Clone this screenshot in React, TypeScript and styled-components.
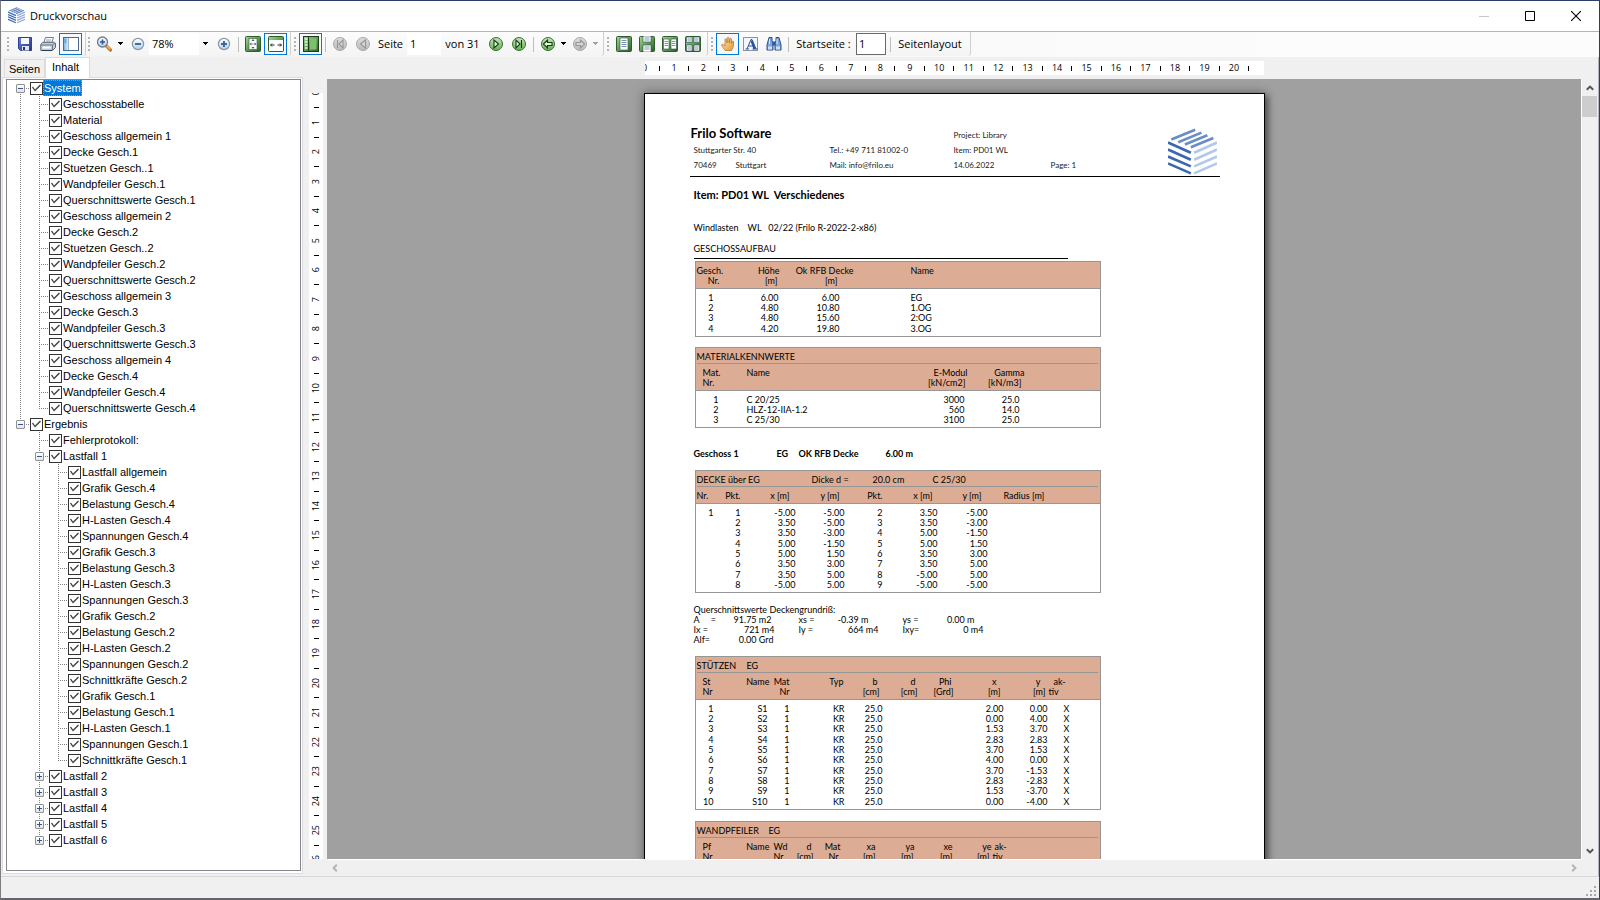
import React from 'react';
import styled, { createGlobalStyle, css } from 'styled-components';

const GlobalStyle = createGlobalStyle`
  * { box-sizing: border-box; }
  body { margin: 0; background: #f0f0f0; overflow: hidden; }
  button, input { font: inherit; color: inherit; }
`;

const uiFont = '"Open Sans", "Noto Sans", sans-serif';
const treeFont = '"Liberation Sans", Arial, sans-serif';
const docFont = 'Lato, Carlito, sans-serif';

/* ---------- window frame ---------- */

const Window = styled.div`
  display: flex;
  flex-direction: column;
  height: 100vh;
  background: #f0f0f0;
  border: 1px solid #2c3e66;
  border-left-color: #7d7d82;
  border-bottom: 2px solid #66666a;
  font: 11px/16px ${uiFont};
  color: #000;
`;

const TitleBar = styled.header`
  display: flex;
  align-items: center;
  flex: 0 0 31px;
  padding: 0 0 1px 7px;
  background: #fff;
  border-bottom: 1px solid #b2b5c1;
`;

const Title = styled.h1`
  flex: 1;
  margin: 0 0 0 5px;
  font-size: 11px;
  font-weight: 400;
  line-height: 16px;
`;

const CaptionButton = styled.button`
  display: grid;
  place-items: center;
  width: 46px;
  height: 29px;
  padding: 0;
  border: 0;
  background: none;
`;

/* ---------- toolbar ---------- */

const Toolbar = styled.div`
  display: flex;
  flex: 0 0 25px;
  background: linear-gradient(to right, #f1f1f2, #fcfcfc 80%);
  padding-left: 1px;
`;

const Strip = styled.div<{ $end?: number }>`
  display: flex;
  align-items: center;
  height: 24px;
  padding-right: ${(p) => p.$end ?? 3}px;
  background: linear-gradient(#fcfcfc, #f4f4f4);
  border-right: 1px solid #d0d0d0;
  border-radius: 0 0 3px 3px;
`;

const Grip = styled.span<{ $w?: number }>`
  flex: 0 0 ${(p) => p.$w ?? 8}px;
  height: 15px;
  background: repeating-linear-gradient(#b4b4b4 0 2px, transparent 2px 4px) center / 2px 100% no-repeat;
`;

const ToolButton = styled.button<{ $active?: boolean }>`
  display: grid;
  place-items: center;
  flex: 0 0 23px;
  height: 22px;
  padding: 0;
  border: 1px solid ${(p) => (p.$active ? '#0078d7' : 'transparent')};
  background: ${(p) => (p.$active ? '#f6f9fc' : 'none')};
`;

const CaretButton = styled.button<{ $w?: number }>`
  display: grid;
  place-items: center;
  flex: 0 0 ${(p) => p.$w ?? 9}px;
  height: 22px;
  padding: 0;
  border: 0;
  background: none;
`;

const Separator = styled.span<{ $w?: number }>`
  flex: 0 0 ${(p) => p.$w ?? 6}px;
  height: 15px;
  background: linear-gradient(#bdbdbd, #bdbdbd) center / 1px 100% no-repeat;
`;

const Field = styled.input<{ $w: number; $boxed?: boolean }>`
  width: ${(p) => p.$w}px;
  height: 22px;
  padding: 0 2px 2px;
  border: 1px solid ${(p) => (p.$boxed ? '#6a6a6a' : '#fff')};
  border-radius: 0;
  background: #fff;
  outline: 0;
`;

const ToolLabel = styled.label<{ $w: number }>`
  flex: 0 0 ${(p) => p.$w}px;
  text-align: center;
  white-space: nowrap;
`;

const TextButton = styled.button`
  flex: 0 0 72px;
  padding: 0;
  border: 0;
  background: none;
  white-space: nowrap;
`;

/* ---------- side panel ---------- */

const Main = styled.div`
  display: flex;
  flex: 1;
  min-height: 0;
  padding-left: 1px;
  border-right: 1px solid #b2b5c1;
`;

const SidePanel = styled.aside`
  display: flex;
  flex-direction: column;
  flex: 0 0 301px;
  margin-bottom: 2px;
  font: 11px/16px ${treeFont};
`;

const TabList = styled.div`
  display: flex;
  align-items: flex-end;
  flex: 0 0 20px;
  padding-left: 2px;
`;

const Tab = styled.button<{ $selected?: boolean }>`
  height: ${(p) => (p.$selected ? 21 : 18)}px;
  width: ${(p) => (p.$selected ? 45 : 41)}px;
  padding: 0 ${(p) => (p.$selected ? '4px 2px 0' : 0)};
  border: 1px solid #dcdcdc;
  border-bottom: 0;
  background: ${(p) => (p.$selected ? '#fff' : '#f0f0f0')};
  margin-bottom: ${(p) => (p.$selected ? -1 : 0)}px;
  z-index: ${(p) => (p.$selected ? 1 : 0)};
`;

const TabPane = styled.div`
  display: flex;
  flex: 1;
  min-height: 0;
  padding: 1px 1px 2px 3px;
  background: #fff;
  border: 1px solid #dcdcdc;
`;

const TreeBox = styled.div`
  flex: 1;
  padding: 0 0 0 4px;
  border: 1px solid #828790;
  background: #fff;
  overflow: hidden;
`;

const TreeRow = styled.div`
  display: flex;
  align-items: center;
  height: 16px;
`;

type GuideKind = 'blank' | 'line' | 'tee' | 'end' | 'first';
const dotsV = 'repeating-linear-gradient(to bottom, #808080 0 1px, transparent 1px 2px)';
const dotsH = 'repeating-linear-gradient(to right, #808080 0 1px, transparent 1px 2px)';
const guideBackground: Record<GuideKind, string> = {
  blank: 'none',
  line: `${dotsV} 9px 0 / 1px 100% no-repeat`,
  tee: `${dotsV} 9px 0 / 1px 100% no-repeat, ${dotsH} 9px 8px / 9px 1px no-repeat`,
  end: `${dotsV} 9px 0 / 1px 8px no-repeat, ${dotsH} 9px 8px / 9px 1px no-repeat`,
  first: `${dotsV} 9px 8px / 1px 8px no-repeat, ${dotsH} 9px 8px / 9px 1px no-repeat`,
};

const Guide = styled.span<{ $kind: GuideKind }>`
  display: flex;
  flex: 0 0 19px;
  height: 16px;
  padding: 4px 5px;
  background: ${(p) => guideBackground[p.$kind]};
`;

const Expander = styled.button`
  display: grid;
  place-items: center;
  width: 9px;
  height: 9px;
  padding: 0;
  border: 1px solid #919191;
  border-radius: 1px;
  background: linear-gradient(#fff, #e4e4e4);
`;

const TreeLabel = styled.label<{ $selected?: boolean }>`
  display: flex;
  align-items: center;
  height: 16px;
  white-space: nowrap;
  span {
    padding: 0 1px;
    height: 16px;
    ${(p) =>
      p.$selected &&
      css`
        background: #0078d7;
        color: #fff;
        outline: 1px dotted #d88a3a;
        outline-offset: -1px;
      `}
  }
`;

const Check = styled.input`
  appearance: none;
  width: 13px;
  height: 13px;
  margin: 0;
  border: 1px solid #333;
  background: #fff;
  &:checked::before {
    content: '';
    display: block;
    width: 11px;
    height: 11px;
    background: #444;
    clip-path: polygon(1px 5px, 2px 4px, 4px 7px, 9px 2px, 10px 3px, 4px 9px);
  }
`;

const system = [
  'Geschosstabelle', 'Material', 'Geschoss allgemein 1', 'Decke Gesch.1', 'Stuetzen Gesch..1',
  'Wandpfeiler Gesch.1', 'Querschnittswerte Gesch.1', 'Geschoss allgemein 2', 'Decke Gesch.2',
  'Stuetzen Gesch..2', 'Wandpfeiler Gesch.2', 'Querschnittswerte Gesch.2', 'Geschoss allgemein 3',
  'Decke Gesch.3', 'Wandpfeiler Gesch.3', 'Querschnittswerte Gesch.3', 'Geschoss allgemein 4',
  'Decke Gesch.4', 'Wandpfeiler Gesch.4', 'Querschnittswerte Gesch.4',
];
const lastfall = [
  'Lastfall allgemein', 'Grafik Gesch.4', 'Belastung Gesch.4', 'H-Lasten Gesch.4', 'Spannungen Gesch.4',
  'Grafik Gesch.3', 'Belastung Gesch.3', 'H-Lasten Gesch.3', 'Spannungen Gesch.3', 'Grafik Gesch.2',
  'Belastung Gesch.2', 'H-Lasten Gesch.2', 'Spannungen Gesch.2', 'Schnittkräfte Gesch.2', 'Grafik Gesch.1',
  'Belastung Gesch.1', 'H-Lasten Gesch.1', 'Spannungen Gesch.1', 'Schnittkräfte Gesch.1',
];

type Node = { text: string; guides: GuideKind[]; box?: 'plus' | 'minus'; selected?: boolean };
const nodes: Node[] = [
  { text: 'System', guides: ['first'], box: 'minus', selected: true },
  ...system.map((text, i): Node => ({ text, guides: ['line', i === system.length - 1 ? 'end' : 'tee'] })),
  { text: 'Ergebnis', guides: ['end'], box: 'minus' },
  { text: 'Fehlerprotokoll:', guides: ['blank', 'tee'] },
  { text: 'Lastfall 1', guides: ['blank', 'tee'], box: 'minus' },
  ...lastfall.map((text, i): Node => ({ text, guides: ['blank', 'line', i === lastfall.length - 1 ? 'end' : 'tee'] })),
  ...[2, 3, 4, 5, 6].map((n): Node => ({ text: `Lastfall ${n}`, guides: ['blank', n === 6 ? 'end' : 'tee'], box: 'plus' })),
];

const Tree = () => (
  <TreeBox role="tree">
    {nodes.map((n, i) => (
      <TreeRow key={i} role="treeitem">
        {n.guides.map((g, j) => (
          <Guide key={j} $kind={g}>
            {n.box && j === n.guides.length - 1 && (
              <Expander aria-label={n.box === 'plus' ? 'Aufklappen' : 'Zuklappen'}>
                <svg width="7" height="7" viewBox="0 0 7 7" shapeRendering="crispEdges">
                  <path d={n.box === 'plus' ? 'M1 3h5v1H1zM3 1h1v5H3z' : 'M1 3h5v1H1z'} fill="#33549c" />
                </svg>
              </Expander>
            )}
          </Guide>
        ))}
        <TreeLabel $selected={n.selected}>
          <Check type="checkbox" defaultChecked />
          <span>{n.text}</span>
        </TreeLabel>
      </TreeRow>
    ))}
  </TreeBox>
);

/* ---------- preview area ---------- */

const Preview = styled.main`
  display: grid;
  grid-template-columns: 24px minmax(0, 1fr) 17px;
  grid-template-rows: 22px minmax(0, 1fr) 17px;
  flex: 1;
  min-width: 0;
`;

const Canvas = styled.div`
  grid-column: 2;
  grid-row: 2;
  display: flex;
  justify-content: center;
  align-items: flex-start;
  padding-top: 14px;
  overflow: hidden;
  background: #a0a0a0;
  box-shadow: 1px 1px 0 #fff;
`;

const RulerH = styled.div`
  grid-column: 2;
  grid-row: 1;
  justify-self: center;
  display: flex;
  justify-content: space-between;
  align-items: center;
  width: 619px;
  height: 14px;
  margin: 4px 0;
  overflow: hidden;
  background: #fff;
  font-size: 9px;
  line-height: 14px;
`;

const RulerV = styled.div`
  grid-column: 1;
  grid-row: 2;
  width: 14px;
  margin: 14px 0 0 6px;
  overflow: hidden;
  background: #fff;
  font-size: 9px;
  line-height: 14px;
`;

const RulerScale = styled.div`
  display: flex;
  flex-direction: column;
  justify-content: space-between;
  align-items: center;
  height: 885px;
`;

const Mark = styled.span<{ $vertical?: boolean }>`
  display: flex;
  align-items: center;
  justify-content: center;
  flex: none;
  ${(p) => (p.$vertical ? 'height: 0; width: 14px;' : 'width: 0;')}
  b {
    flex: none;
    font-weight: 400;
    ${(p) => p.$vertical && 'writing-mode: vertical-rl; transform: rotate(180deg);'}
  }
  i {
    flex: none;
    background: #000;
    width: ${(p) => (p.$vertical ? 5 : 1)}px;
    height: ${(p) => (p.$vertical ? 1 : 5)}px;
  }
`;

const marks = (cm: number, vertical?: boolean) =>
  Array.from({ length: cm * 2 + 1 }, (_, i) => (
    <Mark key={i} $vertical={vertical}>
      {i % 2 ? <i /> : i === cm * 2 ? null : <b>{i / 2}</b>}
    </Mark>
  ));

const ScrollV = styled.div`
  grid-column: 3;
  grid-row: 2;
  display: flex;
  flex-direction: column;
  align-items: center;
  padding: 0 1px;
`;

const ScrollThumb = styled.div`
  width: 15px;
  height: 21px;
  background: #cdcdcd;
`;

const ScrollH = styled.div`
  grid-column: 2;
  grid-row: 3;
  display: flex;
  justify-content: space-between;
`;

const ScrollButton = styled.button`
  display: grid;
  place-items: center;
  width: 15px;
  height: 17px;
  padding: 0;
  border: 0;
  background: none;
`;

const Spacer = styled.div`
  flex: 1;
`;

const StatusBar = styled.footer`
  display: flex;
  justify-content: flex-end;
  align-items: flex-end;
  flex: 0 0 22px;
  padding: 0 3px 2px 0;
  border-top: 1px solid #d7d7d7;
`;

/* ---------- printed sheet ---------- */

const Sheet = styled.article`
  flex: 0 0 621px;
  height: 879px;
  padding: 33px 44px 0 45px;
  background: #fff;
  border: 1px solid #000;
  box-shadow: 0 0 10px 1px rgba(0, 0, 0, 0.3), 3px 3px 6px rgba(0, 0, 0, 0.4);
  font: 9px/10px ${docFont};
  white-space: nowrap;
`;

const Letterhead = styled.header`
  display: grid;
  grid-template-columns: 42px 94px 124px 97px 117px auto;
  grid-template-rows: 15px 15px 15px;
  padding: 1px 0 3px 1px;
  border-bottom: 1px solid #000;
  font-size: 8px;
  line-height: 15px;
  color: #222;
`;

const Company = styled.strong`
  grid-column: 1 / 4;
  font-size: 13px;
  line-height: 10px;
  color: #000;
`;

const HeadCell = styled.span<{ $col: string; $row: string }>`
  grid-column: ${(p) => p.$col};
  grid-row: ${(p) => p.$row};
  padding-left: 3px;
`;

const LogoCell = styled.span`
  display: flex;
  grid-column: 6;
  grid-row: 1 / 4;
  align-items: flex-start;
  padding-left: 3px;
`;

const Content = styled.section`
  padding-left: 4px;
`;

const ItemTitle = styled.h2`
  margin: 11px 0 20px;
  font-size: 11px;
  line-height: 14px;
  white-space: pre;
`;

const Line = styled.p`
  margin: 0 0 9px;
  line-height: 12px;
  white-space: pre;
`;

const SectionTitle = styled.h3`
  width: 374px;
  margin: 0 0 2px;
  padding-bottom: 3px;
  border-bottom: 1px solid #000;
  font-size: 9px;
  font-weight: 400;
  line-height: 12px;
`;

const FloorLine = styled.h3`
  display: flex;
  margin: 20px 0 10px;
  font-size: 9px;
  line-height: 12px;
`;

const Part = styled.span<{ $w?: number }>`
  flex: none;
  width: ${(p) => (p.$w ? `${p.$w}px` : 'auto')};
`;

const DataTable = styled.table<{ $gap?: number }>`
  width: 406px;
  margin: ${(p) => p.$gap ?? 0}px 0 0 1px;
  table-layout: fixed;
  border-collapse: separate;
  border-spacing: 0;
  border: 1px solid #969696;
  thead { background: #dcac94; }
  thead tr:last-child th { padding-bottom: 2px; border-bottom: 1px solid #969696; }
  tbody tr:first-child td { padding-top: 4px; }
  tbody tr:nth-child(3n) td { padding-bottom: 1px; }
  tbody tr:last-child td { padding-bottom: 2px; }
`;

const cell = css<{ $align: 'l' | 'r'; $pad: number; $top?: boolean }>`
  padding: ${(p) => (p.$top ? 4 : 0)}px ${(p) => (p.$align === 'r' ? p.$pad : 0)}px 0
    ${(p) => (p.$align === 'l' ? p.$pad : 0)}px;
  text-align: ${(p) => (p.$align === 'r' ? 'right' : 'left')};
  font-weight: 400;
  line-height: 10px;
  height: 10px;
  vertical-align: top;
`;
const Th = styled.th`${cell}`;
const Td = styled.td`${cell}`;

const TitleCell = styled.th`
  padding: 0 2px 0 1px;
  font-weight: 400;
`;

const TitleLine = styled.div`
  display: flex;
  height: 16px;
  padding-top: 4px;
  border-bottom: 1px solid #969696;
`;

type Align = 'l' | 'r';
type HeadSpec = [string, Align?, number?];
type Column = [number, Align, number];

type ReportProps = {
  columns: Column[];
  title?: [string, number?][];
  head: HeadSpec[][];
  rows: string[][];
  gap?: number;
};

const Report = ({ columns, title, head, rows, gap }: ReportProps) => (
  <DataTable $gap={gap}>
    <colgroup>
      {columns.map(([w], i) => (
        <col key={i} width={i === columns.length - 1 ? undefined : w} />
      ))}
    </colgroup>
    <thead>
      {title && (
        <tr>
          <TitleCell colSpan={columns.length}>
            <TitleLine>
              {title.map(([t, w]) => (
                <Part key={t} $w={w} style={{ textAlign: 'left' }}>{t}</Part>
              ))}
            </TitleLine>
          </TitleCell>
        </tr>
      )}
      {head.map((line, r) => (
        <tr key={r}>
          {line.map(([t, a = 'l', pad = 0], i) => (
            <Th key={i} $align={a} $pad={pad} $top={r === 0}>{t}</Th>
          ))}
        </tr>
      ))}
    </thead>
    <tbody>
      {rows.map((row, r) => (
        <tr key={r}>
          {row.map((t, i) => (
            <Td key={i} $align={columns[i][1]} $pad={columns[i][2]}>{t}</Td>
          ))}
        </tr>
      ))}
    </tbody>
  </DataTable>
);

const Summary = styled.table`
  width: 406px;
  margin: 12px 0 11px;
  table-layout: fixed;
  border-collapse: collapse;
  white-space: pre;
  caption { text-align: left; line-height: 10px; }
`;

const summaryRows: HeadSpec[][] = [
  [['A     ='], ['91.75 m2', 'r', 27], ['xs ='], ['-0.39 m', 'r', 34], ['ys ='], ['0.00 m', 'r', 125]],
  [['Ix ='], ['721 m4', 'r', 24], ['Iy ='], ['664 m4', 'r', 24], ['Ixy='], ['0 m4', 'r', 116]],
  [['Alf='], ['0.00 Grd', 'r', 25], [''], [''], [''], ['']],
];

const deckPoints = [
  ['1', '1', '-5.00', '-5.00', '2', '3.50', '-5.00', ''],
  ['', '2', '3.50', '-5.00', '3', '3.50', '-3.00', ''],
  ['', '3', '3.50', '-3.00', '4', '5.00', '-1.50', ''],
  ['', '4', '5.00', '-1.50', '5', '5.00', '1.50', ''],
  ['', '5', '5.00', '1.50', '6', '3.50', '3.00', ''],
  ['', '6', '3.50', '3.00', '7', '3.50', '5.00', ''],
  ['', '7', '3.50', '5.00', '8', '-5.00', '5.00', ''],
  ['', '8', '-5.00', '5.00', '9', '-5.00', '-5.00', ''],
];

const supports = [
  ['2.00', '0.00'], ['0.00', '4.00'], ['1.53', '3.70'], ['2.83', '2.83'], ['3.70', '1.53'],
  ['4.00', '0.00'], ['3.70', '-1.53'], ['2.83', '-2.83'], ['1.53', '-3.70'], ['0.00', '-4.00'],
].map(([x, y], i) => [`${i + 1}`, `S${i + 1}`, '1', 'KR', '25.0', '', '', x, y, 'X']);

/* ---------- drawings ---------- */

const Logo = ({ size, bold }: { size: number; bold?: boolean }) => {
  const w = bold ? 11 : 8;
  return (
    <svg width={size} height={size} viewBox="0 0 148 148" fill="none" strokeWidth={w}>
      <path stroke="#3a68ae" d="M0 44l69 31M0 65l69 31M0 86l69 30M0 107l69 30" />
      <path stroke={bold ? '#8fa9d8' : '#b3c8ea'} d="M79 75l69-31M79 96l69-31M79 116l69-30M79 137l69-30" />
      <path stroke="#6a8cc9" d="M10 35L82 5M31 43l70-29M51 50l68-28M69 58l68-28" />
    </svg>
  );
};

const Icon = ({ children }: { children: React.ReactNode }) => (
  <svg width="16" height="16" viewBox="0 0 16 16" fill="none">{children}</svg>
);

const HiddenSvg = styled.svg`
  display: block;
`;

const Defs = () => (
  <HiddenSvg width="0" height="0" aria-hidden="true">
    <defs>
      <linearGradient id="green" x1="0" y1="0" x2="1" y2="1">
        <stop offset="0" stopColor="#a5d69b" />
        <stop offset="0.5" stopColor="#5d9e55" />
        <stop offset="1" stopColor="#2c5a2a" />
      </linearGradient>
      <linearGradient id="ball" x1="0" y1="0" x2="0" y2="1">
        <stop offset="0" stopColor="#c4e8b8" />
        <stop offset="1" stopColor="#62b050" />
      </linearGradient>
      <linearGradient id="grey" x1="0" y1="0" x2="0" y2="1">
        <stop offset="0" stopColor="#dedede" />
        <stop offset="1" stopColor="#b9b9b9" />
      </linearGradient>
      <linearGradient id="lens" x1="0" y1="0" x2="0" y2="1">
        <stop offset="0" stopColor="#fff" />
        <stop offset="1" stopColor="#b5cfea" />
      </linearGradient>
      <linearGradient id="navy" x1="0" y1="0" x2="1" y2="1">
        <stop offset="0" stopColor="#6f86dd" />
        <stop offset="1" stopColor="#22337e" />
      </linearGradient>
      <linearGradient id="skin" x1="0" y1="0" x2="1" y2="1">
        <stop offset="0" stopColor="#ffe9b4" />
        <stop offset="1" stopColor="#e79a35" />
      </linearGradient>
      <linearGradient id="pane" x1="0" y1="0" x2="1" y2="0">
        <stop offset="0" stopColor="#7fb9e2" />
        <stop offset="1" stopColor="#d6ecfa" />
      </linearGradient>
    </defs>
  </HiddenSvg>
);

const SaveIcon = () => (
  <Icon>
    <path d="M1.500 1.500h13v13h-11l-2-2z" fill="url(#navy)" stroke="#2d3f92" />
    <path d="M4 2h8v6H4z" fill="#f4f7ff" />
    <path d="M5 10h7v4.500H5z" fill="#dfe4f0" />
    <path d="M6 11h2v3H6z" fill="#24326f" />
  </Icon>
);
const PrintIcon = () => (
  <Icon>
    <path d="M5.500 1.500h8l-2 6h-8z" fill="#fff" stroke="#6d7f95" />
    <path d="M6 4h5M5.500 6h5" stroke="#7da3cf" />
    <path d="M.8 8.500l2-2.200h11l1.700 1.200v4l-3 3H.8z" fill="#c3ccd6" stroke="#5c6876" />
    <path d="M1 9h11.500v5M12.500 9l3-2" stroke="#6c7886" />
    <path d="M2.500 11.500h8" stroke="#fff" strokeWidth="2" />
    <path d="M2 14.500h10" stroke="#2f3a48" />
  </Icon>
);
const PanelIcon = () => (
  <Icon>
    <rect x=".5" y="1.500" width="15" height="13" fill="#fff" stroke="#4a6c94" />
    <path d="M1 2h4v12H1z" fill="url(#pane)" />
    <path d="M1.500 4h2M1.500 6h2" stroke="#3d86c0" />
    <path d="M5.500 2v12" stroke="#9cb2c8" />
  </Icon>
);
const MagnifyIcon = () => (
  <Icon>
    <path d="M10 9.500l4.500 4.500" stroke="#c77b2c" strokeWidth="3.200" strokeLinecap="round" />
    <path d="M10.500 9.500l3.500 3.500" stroke="#f0bf7b" strokeWidth="1.200" />
    <circle cx="6.500" cy="6" r="5" fill="url(#lens)" stroke="#6d7b8c" strokeWidth="1.300" />
    <path d="M4 6h5M6.500 3.500v5" stroke="#2d5a96" strokeWidth="1.600" />
  </Icon>
);
const RoundIcon = ({ plus }: { plus?: boolean }) => (
  <Icon>
    <circle cx="8" cy="8" r="5.600" fill="url(#lens)" stroke="#8d98a5" strokeWidth="1.200" />
    <path d={plus ? 'M5 8h6M8 5v6' : 'M5 8h6'} stroke="#3a679f" strokeWidth="1.900" />
  </Icon>
);
const FitPageIcon = () => (
  <Icon>
    <rect x=".5" y=".5" width="15" height="15" rx="1" fill="url(#green)" stroke="#2f5e2c" />
    <rect x="4" y="2.500" width="8" height="11" fill="#fff" stroke="#3d5a3a" strokeWidth=".6" />
    <path d="M8 3l1.500 2h-3zM8 13l1.500-2h-3zM4.500 8l2-1.500v3zM11.500 8l-2-1.500v3z" fill="#44546a" />
    <path d="M7.500 7.500h1v1h-1z" fill="#44546a" />
  </Icon>
);
const FitWidthIcon = () => (
  <Icon>
    <rect x=".5" y=".5" width="15" height="15" rx="1" fill="url(#green)" stroke="#2f5e2c" />
    <rect x="1" y="4" width="14" height="11" fill="#fff" />
    <path d="M2.500 9h4M9.500 9h4M4 7.500L2.500 9 4 10.500M12 7.500L13.500 9 12 10.500" stroke="#1d2a38" />
  </Icon>
);
const ThumbIcon = () => (
  <Icon>
    <rect x=".5" y=".5" width="15" height="15" fill="url(#green)" stroke="#1e3c1c" />
    <path d="M5.500 1v14" stroke="#1e3c1c" />
    <path d="M2 3h2.500M2 6h2.500M2 9h2.500M2 12h2.500" stroke="#e9fbe4" strokeWidth="1.500" />
    <path d="M7 2.500h6.500v11H7z" fill="#7cc06e" />
  </Icon>
);
const navPaths = {
  first: 'M5.500 4v8M11 4v8L7 8z',
  prev: 'M10.500 4v8L5.500 8z',
  next: 'M6 4v8l4.500-4z',
  last: 'M5 4v8l4-4zM10.500 4v8',
  back: 'M3.500 8l4-4v2.500h4.500v3H7.500V12z',
  forward: 'M12.500 8l-4-4v2.500H4v3h4.500V12z',
};
const NavIcon = ({ kind, off }: { kind: keyof typeof navPaths; off?: boolean }) => (
  <Icon>
    <circle cx="8" cy="8" r="6.500" fill={off ? 'url(#grey)' : 'url(#ball)'} stroke={off ? '#a9a9a9' : '#3d6b36'} />
    <path d={navPaths[kind]} fill={off ? '#d6d6d6' : '#e6f8df'} stroke={off ? '#969696' : '#173a14'} strokeWidth="1.100" />
  </Icon>
);
const LayoutIcon = ({ kind }: { kind: 'single' | 'rows' | 'cols' | 'grid' }) => {
  const pages = {
    single: 'M4 2h8v12H4z',
    rows: 'M4 0h8v6H4zM4 9h8v7H4z',
    cols: 'M1.500 3H7v10H1.500zM9 3h5.500v10H9z',
    grid: 'M1.500 1H7v5.500H1.500zM9 1h5.500v5.500H9zM1.500 9H7v6H1.500zM9 9h5.500v6H9z',
  };
  const lines = {
    single: 'M5.500 4.500h5M5.500 6.500h5M5.500 8.500h5M5.500 10.500h5',
    rows: 'M5.500 2h5M5.500 4h5M5.500 11h5M5.500 13h5',
    cols: 'M2.500 5.500h3.500M2.500 7.500h3.500M2.500 9.500h3.500M10 5.500h3.500M10 7.500h3.500M10 9.500h3.500',
    grid: 'M2.500 3h3.500M2.500 5h3.500M10 3h3.500M10 5h3.500M2.500 11h3.500M2.500 13h3.500M10 11h3.500M10 13h3.500',
  };
  return (
    <Icon>
      <rect x=".5" y=".5" width="15" height="15" rx="1" fill="url(#green)" stroke="#2f5e2c" />
      <path d={pages[kind]} fill="#fff" stroke="#2b4d52" strokeWidth=".6" />
      <path d={lines[kind]} stroke="#6d87a8" strokeWidth=".9" />
    </Icon>
  );
};
const HandIcon = () => (
  <Icon>
    <path
      d="M5.200 14.500L1.800 9.800c-.8-1.200.6-2 1.400-1.200L5 10V3.600c0-1.200 1.500-1.200 1.600 0L7 7l.2-4.800c0-1.300 1.700-1.300 1.800 0L9.200 7l.6-4c.2-1.100 1.700-.9 1.600.3L11.400 7.500l.6-2c.4-.9 1.700-.5 1.600.5L13.300 10.500l-1.800 4z"
      fill="url(#skin)"
      stroke="#b5742c"
      strokeWidth=".8"
    />
  </Icon>
);
const SelectTextIcon = () => (
  <Icon>
    <rect x=".5" y="1.500" width="14" height="13" fill="#f3f7fd" stroke="#222f4a" strokeDasharray="1 1" />
    <path d="M4 13l4-9.500h1l4 9.500M5.500 10h6M2.500 13h3.500M9.500 13h5" stroke="#2c5399" />
    <path d="M8.500 4.500l3.200 8.500" stroke="#2c5399" strokeWidth="2.200" />
  </Icon>
);
const FindIcon = () => (
  <Icon>
    <path d="M3 1.500h3v3l1 2v7.500H1V9z" fill="#7fa3da" stroke="#294f8f" />
    <path d="M10 1.500h3L15 9v5H9V6.500l1-2z" fill="#7fa3da" stroke="#294f8f" />
    <path d="M6.500 5.500h3v4h-3z" fill="#2f5698" />
    <path d="M2 10.500h4v3H2zM10 10.500h4v3h-4z" fill="#cfdff5" />
    <path d="M3.500 3v5M11 3v5" stroke="#dbe7f8" />
  </Icon>
);

const Caret = ({ off }: { off?: boolean }) => (
  <svg width="7" height="4" viewBox="0 0 7 4" shapeRendering="crispEdges">
    <path d="M1 0h5v1H5v1H4v1H3V2H2V1H1z" fill={off ? '#a0a0a0' : '#000'} />
  </svg>
);

const arrowTurn = { up: 0, right: 90, down: 180, left: 270 };
const ScrollArrow = ({ to, off }: { to: keyof typeof arrowTurn; off?: boolean }) => (
  <svg width="8" height="8" viewBox="0 0 8 8" fill="none">
    <path
      d="M.8 5.800L4 2.600l3.200 3.200"
      stroke={off ? '#b4b4b8' : '#55555e'}
      strokeWidth="2"
      transform={`rotate(${arrowTurn[to]} 4 4)`}
    />
  </svg>
);

/* ---------- document ---------- */

const Document = () => (
  <Sheet>
    <Letterhead>
      <Company>Frilo Software</Company>
      <HeadCell $col="4" $row="1">Project: Library</HeadCell>
      <HeadCell $col="1 / 3" $row="2">Stuttgarter Str. 40</HeadCell>
      <HeadCell $col="3" $row="2">Tel.: +49 711 81002-0</HeadCell>
      <HeadCell $col="4" $row="2">Item: PD01 WL</HeadCell>
      <HeadCell $col="1" $row="3">70469</HeadCell>
      <HeadCell $col="2" $row="3">Stuttgart</HeadCell>
      <HeadCell $col="3" $row="3">Mail: info@frilo.eu</HeadCell>
      <HeadCell $col="4" $row="3">14.06.2022</HeadCell>
      <HeadCell $col="5" $row="3">Page: 1</HeadCell>
      <LogoCell><Logo size={49} /></LogoCell>
    </Letterhead>
    <Content>
      <ItemTitle>{'Item: PD01 WL  Verschiedenes'}</ItemTitle>
      <Line>{'Windlasten    WL   02/22 (Frilo R-2022-2-x86)'}</Line>
      <SectionTitle>GESCHOSSAUFBAU</SectionTitle>
      <Report
        columns={[[28, 'r', 10], [60, 'r', 5], [76, 'r', 20], [240, 'l', 51]]}
        head={[
          [['Gesch.', 'l', 1], ['Höhe', 'r', 4], ['Ok RFB Decke', 'r', 6], ['Name', 'l', 51]],
          [['Nr.', 'r', 4], ['[m]', 'r', 6], ['[m]', 'r', 22], ['']],
        ]}
        rows={[
          ['1', '6.00', '6.00', 'EG'],
          ['2', '4.80', '10.80', '1.OG'],
          ['3', '4.80', '15.60', '2:OG'],
          ['4', '4.20', '19.80', '3.OG'],
        ]}
      />
      <Report
        gap={10}
        title={[['MATERIALKENNWERTE']]}
        columns={[[44, 'r', 21], [140, 'l', 7], [96, 'r', 11], [124, 'r', 80]]}
        head={[
          [['Mat.', 'l', 7], ['Name', 'l', 7], ['E-Modul', 'r', 8], ['Gamma', 'r', 75]],
          [['Nr.', 'l', 7], [''], ['[kN/cm2]', 'r', 10], ['[kN/m3]', 'r', 78]],
        ]}
        rows={[
          ['1', 'C 20/25', '3000', '25.0'],
          ['2', 'HLZ-12-IIA-1.2', '560', '14.0'],
          ['3', 'C 25/30', '3100', '25.0'],
        ]}
      />
      <FloorLine>
        <Part $w={83}>Geschoss 1</Part>
        <Part $w={22}>EG</Part>
        <Part $w={87}>OK RFB Decke</Part>
        <Part>6.00 m</Part>
      </FloorLine>
      <Report
        title={[['DECKE über EG', 115], ['Dicke d =', 61], ['20.0 cm', 60], ['C 25/30']]}
        columns={[
          [23, 'r', 5], [27, 'r', 5], [55, 'r', 5], [49, 'r', 5], [38, 'r', 5], [55, 'r', 5], [50, 'r', 5], [107, 'l', 11],
        ]}
        head={[
          [
            ['Nr.', 'l', 1], ['Pkt.', 'r', 5], ['x [m]', 'r', 11], ['y [m]', 'r', 10], ['Pkt.', 'r', 5], ['x [m]', 'r', 10],
            ['y [m]', 'r', 11], ['Radius [m]', 'l', 11],
          ],
        ]}
        rows={deckPoints}
      />
      <Summary>
        <caption>Querschnittswerte Deckengrundriß:</caption>
        <colgroup>
          {[30, 75, 25, 79, 25].map((w, i) => <col key={i} width={w} />)}
          <col />
        </colgroup>
        <tbody>
          {summaryRows.map((row, r) => (
            <tr key={r}>
              {row.map(([t, a = 'l', pad = 0], i) => (
                <Td key={i} $align={a} $pad={pad}>{t}</Td>
              ))}
            </tr>
          ))}
        </tbody>
      </Summary>
      <Report
        title={[['STÜTZEN', 50], ['EG']]}
        columns={[
          [23, 'r', 5], [53, 'r', 4], [22, 'r', 4], [56, 'r', 5], [36, 'r', 3], [36, 'r', 3], [38, 'r', 5], [46, 'r', 2],
          [43, 'r', 1], [51, 'l', 15],
        ]}
        head={[
          [
            ['St', 'l', 7], ['Name', 'r', 2], ['Mat', 'r', 4], ['Typ', 'r', 6], ['b', 'r', 8], ['d', 'r', 6],
            ['Phi', 'r', 8], ['x', 'r', 9], ['y', 'r', 8], ['ak-', 'l', 5],
          ],
          [
            ['Nr', 'l', 7], [''], ['Nr', 'r', 4], [''], ['[cm]', 'r', 6], ['[cm]', 'r', 4], ['[Grd]', 'r', 6],
            ['[m]', 'r', 5], ['[m]', 'r', 3], ['tiv'],
          ],
        ]}
        rows={supports}
      />
      <Report
        gap={11}
        title={[['WANDPFEILER', 72], ['EG']]}
        columns={[
          [23, 'r', 5], [53, 'r', 4], [22, 'r', 4], [24, 'r', 3], [28, 'r', 5], [36, 'r', 5], [38, 'r', 5], [38, 'r', 5],
          [35, 'r', 1], [107, 'l', 0],
        ]}
        head={[
          [
            ['Pf', 'l', 7], ['Name', 'r', 2], ['Wd', 'r', 6], ['d', 'r', 6], ['Mat', 'r', 5], ['xa', 'r', 6],
            ['ya', 'r', 5], ['xe', 'r', 5], ['ye', 'r', 1], ['ak-', 'l', 2],
          ],
          [
            ['Nr', 'l', 7], [''], ['Nr', 'r', 10], ['[cm]', 'r', 4], ['Nr', 'r', 7], ['[m]', 'r', 6], ['[m]', 'r', 6],
            ['[m]', 'r', 5], ['[m]', 'r', 3], ['tiv'],
          ],
        ]}
        rows={[]}
      />
    </Content>
  </Sheet>
);

const App = () => (
  <>
    <GlobalStyle />
    <Defs />
    <Window>
      <TitleBar>
        <Logo size={17} bold />
        <Title>Druckvorschau</Title>
        <CaptionButton aria-label="Minimieren">
          <svg width="10" height="10" viewBox="0 0 10 10"><path d="M0 5h10v1H0z" fill="#c8c8c8" /></svg>
        </CaptionButton>
        <CaptionButton aria-label="Maximieren">
          <svg width="10" height="10" viewBox="0 0 10 10" fill="none"><path d="M.5.5h9v9h-9z" stroke="#000" /></svg>
        </CaptionButton>
        <CaptionButton aria-label="Schließen">
          <svg width="10" height="10" viewBox="0 0 10 10"><path d="M0 0l10 10M10 0L0 10" stroke="#000" strokeWidth="1.100" /></svg>
        </CaptionButton>
      </TitleBar>

      <Toolbar role="toolbar">
        <Strip>
          <Grip $w={11} />
          <ToolButton aria-label="Speichern"><SaveIcon /></ToolButton>
          <ToolButton aria-label="Drucken"><PrintIcon /></ToolButton>
          <ToolButton $active aria-label="Navigation"><PanelIcon /></ToolButton>
        </Strip>
        <Strip>
          <Grip $w={6} />
          <ToolButton aria-label="Zoom"><MagnifyIcon /></ToolButton>
          <CaretButton $w={11} aria-label="Zoomwerkzeug"><Caret /></CaretButton>
          <ToolButton aria-label="Verkleinern"><RoundIcon /></ToolButton>
          <Field $w={50} defaultValue="78%" aria-label="Zoomfaktor" />
          <CaretButton $w={13} aria-label="Zoomfaktor wählen"><Caret /></CaretButton>
          <ToolButton aria-label="Vergrößern"><RoundIcon plus /></ToolButton>
          <Separator />
          <ToolButton aria-label="Ganze Seite"><FitPageIcon /></ToolButton>
          <ToolButton $active aria-label="Seitenbreite"><FitWidthIcon /></ToolButton>
        </Strip>
        <Strip>
          <Grip />
          <ToolButton $active aria-label="Miniaturen"><ThumbIcon /></ToolButton>
          <Separator />
          <ToolButton aria-label="Erste Seite"><NavIcon kind="first" off /></ToolButton>
          <ToolButton aria-label="Vorige Seite"><NavIcon kind="prev" off /></ToolButton>
          <ToolLabel $w={33} htmlFor="seite">Seite</ToolLabel>
          <Field $w={34} id="seite" defaultValue="1" />
          <ToolLabel as="span" $w={43}>von 31</ToolLabel>
          <ToolButton aria-label="Nächste Seite"><NavIcon kind="next" /></ToolButton>
          <ToolButton aria-label="Letzte Seite"><NavIcon kind="last" /></ToolButton>
          <Separator />
          <ToolButton aria-label="Zurück"><NavIcon kind="back" /></ToolButton>
          <CaretButton aria-label="Verlauf zurück"><Caret /></CaretButton>
          <ToolButton aria-label="Vorwärts"><NavIcon kind="forward" off /></ToolButton>
          <CaretButton aria-label="Verlauf vorwärts"><Caret off /></CaretButton>
        </Strip>
        <Strip>
          <Grip />
          <ToolButton aria-label="Einzelseite"><LayoutIcon kind="single" /></ToolButton>
          <ToolButton aria-label="Fortlaufend"><LayoutIcon kind="rows" /></ToolButton>
          <ToolButton aria-label="Doppelseite"><LayoutIcon kind="cols" /></ToolButton>
          <ToolButton aria-label="Doppelseite fortlaufend"><LayoutIcon kind="grid" /></ToolButton>
        </Strip>
        <Strip $end={4}>
          <Grip />
          <ToolButton $active aria-label="Hand"><HandIcon /></ToolButton>
          <ToolButton aria-label="Text auswählen"><SelectTextIcon /></ToolButton>
          <ToolButton aria-label="Suchen"><FindIcon /></ToolButton>
          <Separator />
          <ToolLabel $w={65} htmlFor="startseite">Startseite :</ToolLabel>
          <Field $w={30} $boxed id="startseite" defaultValue="1" />
          <Separator $w={8} />
          <TextButton>Seitenlayout</TextButton>
        </Strip>
      </Toolbar>

      <Main>
        <SidePanel>
          <TabList role="tablist">
            <Tab role="tab">Seiten</Tab>
            <Tab role="tab" $selected aria-selected>Inhalt</Tab>
          </TabList>
          <TabPane><Tree /></TabPane>
        </SidePanel>
        <Preview>
          <RulerH>{marks(21)}</RulerH>
          <RulerV><RulerScale>{marks(30, true)}</RulerScale></RulerV>
          <Canvas><Document /></Canvas>
          <ScrollV>
            <ScrollButton aria-label="Nach oben"><ScrollArrow to="up" /></ScrollButton>
            <ScrollThumb />
            <Spacer />
            <ScrollButton aria-label="Nach unten"><ScrollArrow to="down" /></ScrollButton>
          </ScrollV>
          <ScrollH>
            <ScrollButton aria-label="Nach links"><ScrollArrow to="left" off /></ScrollButton>
            <ScrollButton aria-label="Nach rechts"><ScrollArrow to="right" off /></ScrollButton>
          </ScrollH>
        </Preview>
      </Main>

      <StatusBar>
        <svg width="10" height="10" viewBox="0 0 10 10">
          <path d="M8 0h2v2H8zM4 4h2v2H4zM8 4h2v2H8zM0 8h2v2H0zM4 8h2v2H4zM8 8h2v2H8z" fill="#a8a8a8" />
        </svg>
      </StatusBar>
    </Window>
  </>
);

export default App;
